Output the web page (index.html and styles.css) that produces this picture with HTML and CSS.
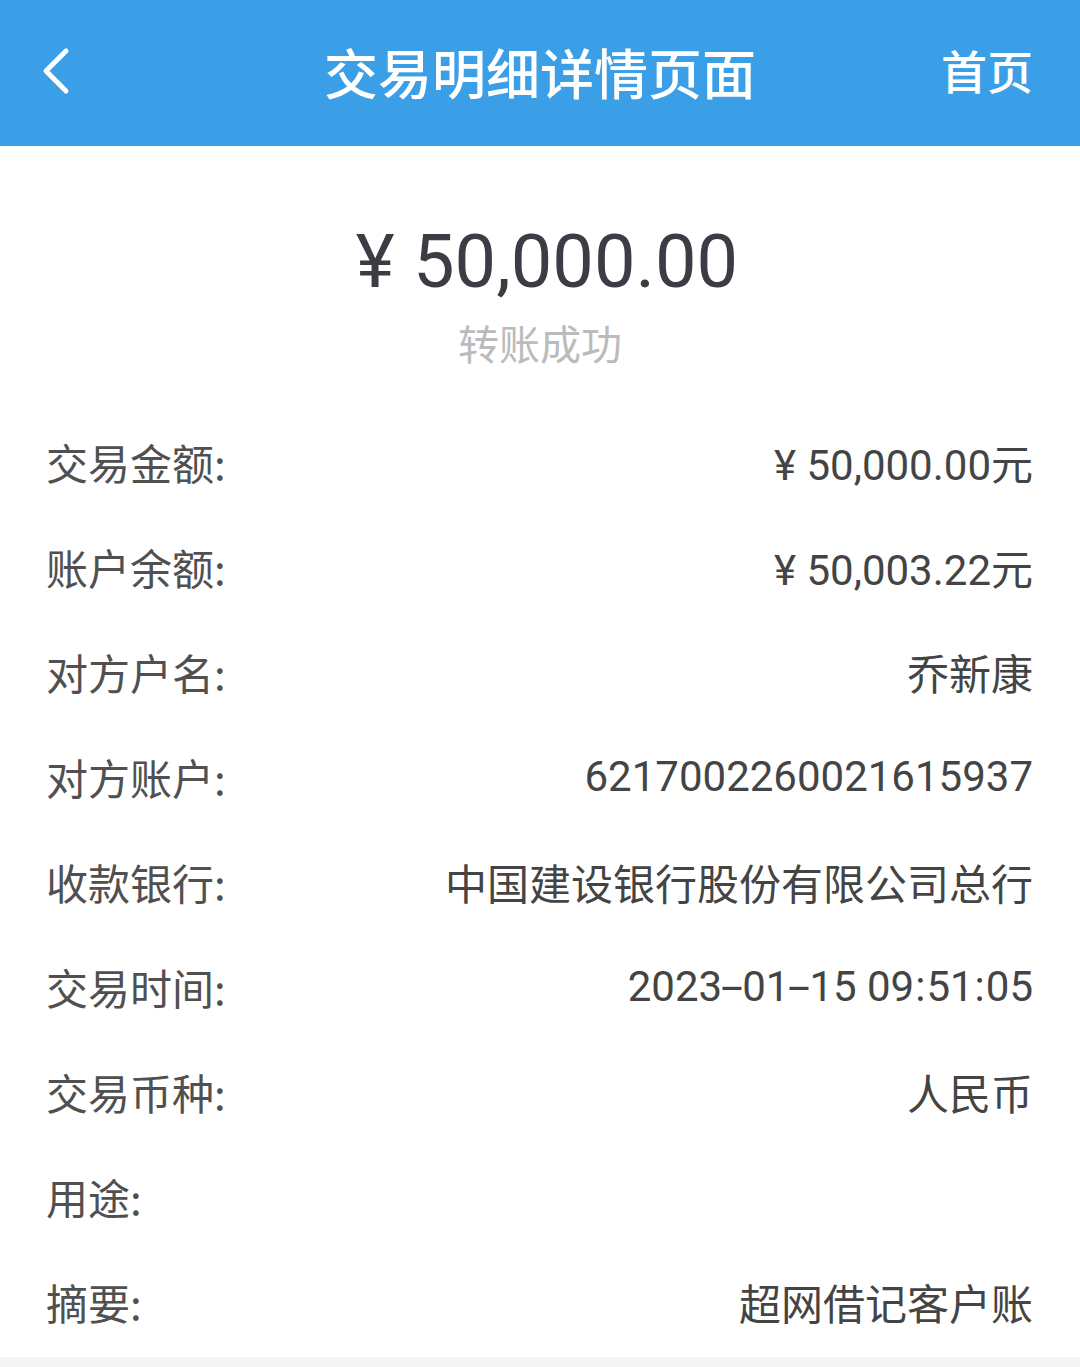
FILE: index.html
```
<!DOCTYPE html>
<html>
<head>
<meta charset="utf-8">
<title>交易明细详情页面</title>
<link rel="stylesheet" href="styles.css">
</head>
<body>
    <div class="top-bar">
        <div class="back-btn">
            <svg width="34" height="48" viewBox="0 0 34 48">
                <polyline points="26,4 6,24 26,44" fill="none" stroke="#ffffff" stroke-width="5" stroke-linecap="round" stroke-linejoin="round"/>
            </svg>
        </div>
        <div class="top-title">交易明细详情页面</div>
        <div class="home-link">首页</div>
    </div>

    <div class="page">
        <div class="hero">
            <div class="hero-amount">¥ 50,000.00</div>
            <div class="hero-status">转账成功</div>
        </div>

        <div class="detail-list">
            <div class="detail-row">
                <span class="detail-label">交易金额:</span>
                <span class="detail-value">¥ 50,000.00元</span>
            </div>
            <div class="detail-row">
                <span class="detail-label">账户余额:</span>
                <span class="detail-value">¥ 50,003.22元</span>
            </div>
            <div class="detail-row">
                <span class="detail-label">对方户名:</span>
                <span class="detail-value">乔新康</span>
            </div>
            <div class="detail-row">
                <span class="detail-label">对方账户:</span>
                <span class="detail-value">6217002260021615937</span>
            </div>
            <div class="detail-row">
                <span class="detail-label">收款银行:</span>
                <span class="detail-value">中国建设银行股份有限公司总行</span>
            </div>
            <div class="detail-row">
                <span class="detail-label">交易时间:</span>
                <span class="detail-value">2023<span class="dash">-</span>01<span class="dash">-</span>15 09<span class="colon">:</span>51<span class="colon">:</span>05</span>
            </div>
            <div class="detail-row">
                <span class="detail-label">交易币种:</span>
                <span class="detail-value">人民币</span>
            </div>
            <div class="detail-row">
                <span class="detail-label">用途:</span>
                <span class="detail-value"></span>
            </div>
            <div class="detail-row">
                <span class="detail-label">摘要:</span>
                <span class="detail-value">超网借记客户账</span>
            </div>
        </div>
    </div>
</body>
</html>
```

FILE: styles.css
```
html, body {
    margin: 0;
    padding: 0;
}

body {
    background: #f4f4f4;
    font-family: Roboto, "Noto Sans CJK SC", sans-serif;
    color: #4a4a4a;
}

.top-bar {
    height: 146px;
    background: #3a9fe6;
    color: #ffffff;
    display: flex;
    align-items: center;
    justify-content: space-between;
    padding: 0 47px 8px 40px;
    box-sizing: border-box;
    position: relative;
}

.back-btn {
    display: flex;
    align-items: center;
    margin-top: 4px;
}

.top-title {
    position: absolute;
    left: 0;
    right: 0;
    top: 42px;
    line-height: 60px;
    text-align: center;
    font-family: "Noto Sans CJK SC", sans-serif;
    font-size: 54px;
    font-weight: 500;
    pointer-events: none;
}

.home-link {
    font-family: "Noto Sans CJK SC", sans-serif;
    font-size: 46px;
    font-weight: 500;
}

.page {
    background: #ffffff;
}

.hero {
    padding: 74px 0 0 14px;
    text-align: center;
}

.hero-amount {
    font-size: 74px;
    line-height: 84px;
    color: #3c3c44;
}

.hero-status {
    margin-top: 13px;
    padding-right: 14px;
    font-family: "Noto Sans CJK SC", sans-serif;
    font-size: 41px;
    line-height: 50px;
    color: #bbbbbb;
}

.detail-list {
    padding: 42px 47px 3px 46px;
}

.detail-row {
    display: flex;
    justify-content: space-between;
    align-items: center;
    height: 105px;
    font-size: 42px;
}

.detail-label {
    font-family: "Noto Sans CJK SC", sans-serif;
    color: #505050;
}

.detail-value {
    color: #444444;
}

.dash {
    display: inline-block;
    width: 20px;
    text-align: center;
    transform: scaleX(1.9);
}

.colon {
    padding: 0 1px;
}
```
